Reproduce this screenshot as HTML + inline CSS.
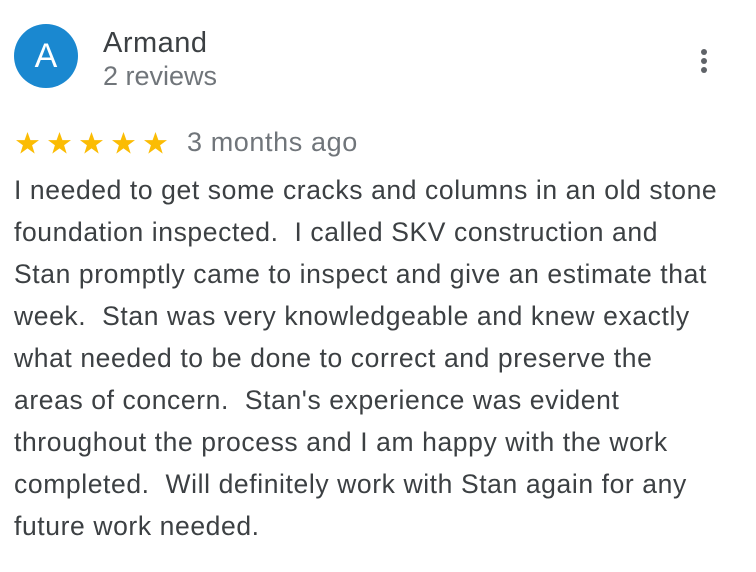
<!DOCTYPE html>
<html><head><style>
body{margin:0;width:756px;height:572px;background:#fff;font-family:"Liberation Sans",Arial,sans-serif;position:relative;overflow:hidden}
.av{position:absolute;left:14px;top:24px;width:64px;height:64px;border-radius:50%;background:#1a88d0;color:#fff;font-size:34px;text-align:center;line-height:64px}
.name{position:absolute;left:103px;top:27px;font-size:29px;letter-spacing:0.5px;color:#3c4043}
.rev{position:absolute;left:103px;top:61px;font-size:27px;color:#70757a}
.dot{position:absolute;left:701px;width:6px;height:6px;border-radius:50%;background:#5f6368}
.stars{position:absolute;left:14px;top:131px}
.ago{position:absolute;left:187px;top:127px;font-size:27px;letter-spacing:0.6px;color:#70757a}
.txt{position:absolute;left:14px;top:169px;font-size:26.5px;letter-spacing:0.6px;line-height:42px;color:#3c4043;white-space:nowrap}
</style></head><body>
<div class="av">A</div>
<div class="name">Armand</div>
<div class="rev">2 reviews</div>
<div class="dot" style="top:49px"></div><div class="dot" style="top:58px"></div><div class="dot" style="top:67px"></div>
<svg class="stars" width="162" height="26" viewBox="0 0 162 26">
<defs><polygon id="s" points="11.5,1 14.4,9.1 23,9.1 16.1,14.2 18.7,22.6 11.5,17.4 4.3,22.6 6.9,14.2 0,9.1 8.6,9.1" fill="#fbbc04"/></defs>
<use href="#s" x="2"/><use href="#s" x="34"/><use href="#s" x="66"/><use href="#s" x="98"/><use href="#s" x="130"/>
</svg>
<div class="ago">3 months ago</div>
<div class="txt">I needed to get some cracks and columns in an old stone<br>foundation inspected.&nbsp; I called SKV construction and<br>Stan promptly came to inspect and give an estimate that<br>week.&nbsp; Stan was very knowledgeable and knew exactly<br>what needed to be done to correct and preserve the<br>areas of concern.&nbsp; Stan's experience was evident<br>throughout the process and I am happy with the work<br>completed.&nbsp; Will definitely work with Stan again for any<br>future work needed.</div>
</body></html>
